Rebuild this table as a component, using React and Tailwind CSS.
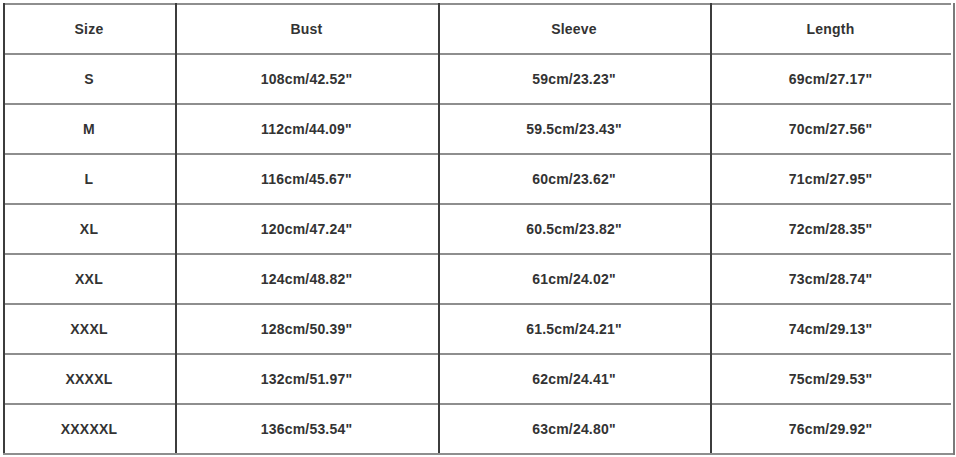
const header = ["Size", "Bust", "Sleeve", "Length"];
const rows = [
  ["S", "108cm/42.52\"", "59cm/23.23\"", "69cm/27.17\""],
  ["M", "112cm/44.09\"", "59.5cm/23.43\"", "70cm/27.56\""],
  ["L", "116cm/45.67\"", "60cm/23.62\"", "71cm/27.95\""],
  ["XL", "120cm/47.24\"", "60.5cm/23.82\"", "72cm/28.35\""],
  ["XXL", "124cm/48.82\"", "61cm/24.02\"", "73cm/28.74\""],
  ["XXXL", "128cm/50.39\"", "61.5cm/24.21\"", "74cm/29.13\""],
  ["XXXXL", "132cm/51.97\"", "62cm/24.41\"", "75cm/29.53\""],
  ["XXXXXL", "136cm/53.54\"", "63cm/24.80\"", "76cm/29.92\""],
];

function Row({ cells }) {
  return (
    <div className="grid grid-cols-[172px_263px_272px_241px] h-[50px]">
      {cells.map((c, i) => (
        <div
          key={i}
          className="relative flex items-center justify-center border-t-2 border-[#8e8e8e] text-[14px] font-bold tracking-[0.2px] text-[#333]"
        >
          <div className="absolute left-0 top-[-2px] bottom-0 w-[2px] bg-[#3c3c3c]" />
          <span>{c}</span>
        </div>
      ))}
    </div>
  );
}

export default function App() {
  return (
    <div className="w-[956px] h-[457px] bg-white pl-[3px] pt-[3px]" style={{ fontFamily: '"Liberation Sans", Arial, sans-serif' }}>
      <div className="w-[950px] relative border-b-2 border-[#8e8e8e]">
        <Row cells={header} />
        {rows.map((r, i) => (
          <Row key={i} cells={r} />
        ))}
        <div className="absolute right-[-2px] top-0 bottom-[-2px] w-[2px] bg-[#7a7a7a]" />
      </div>
    </div>
  );
}
